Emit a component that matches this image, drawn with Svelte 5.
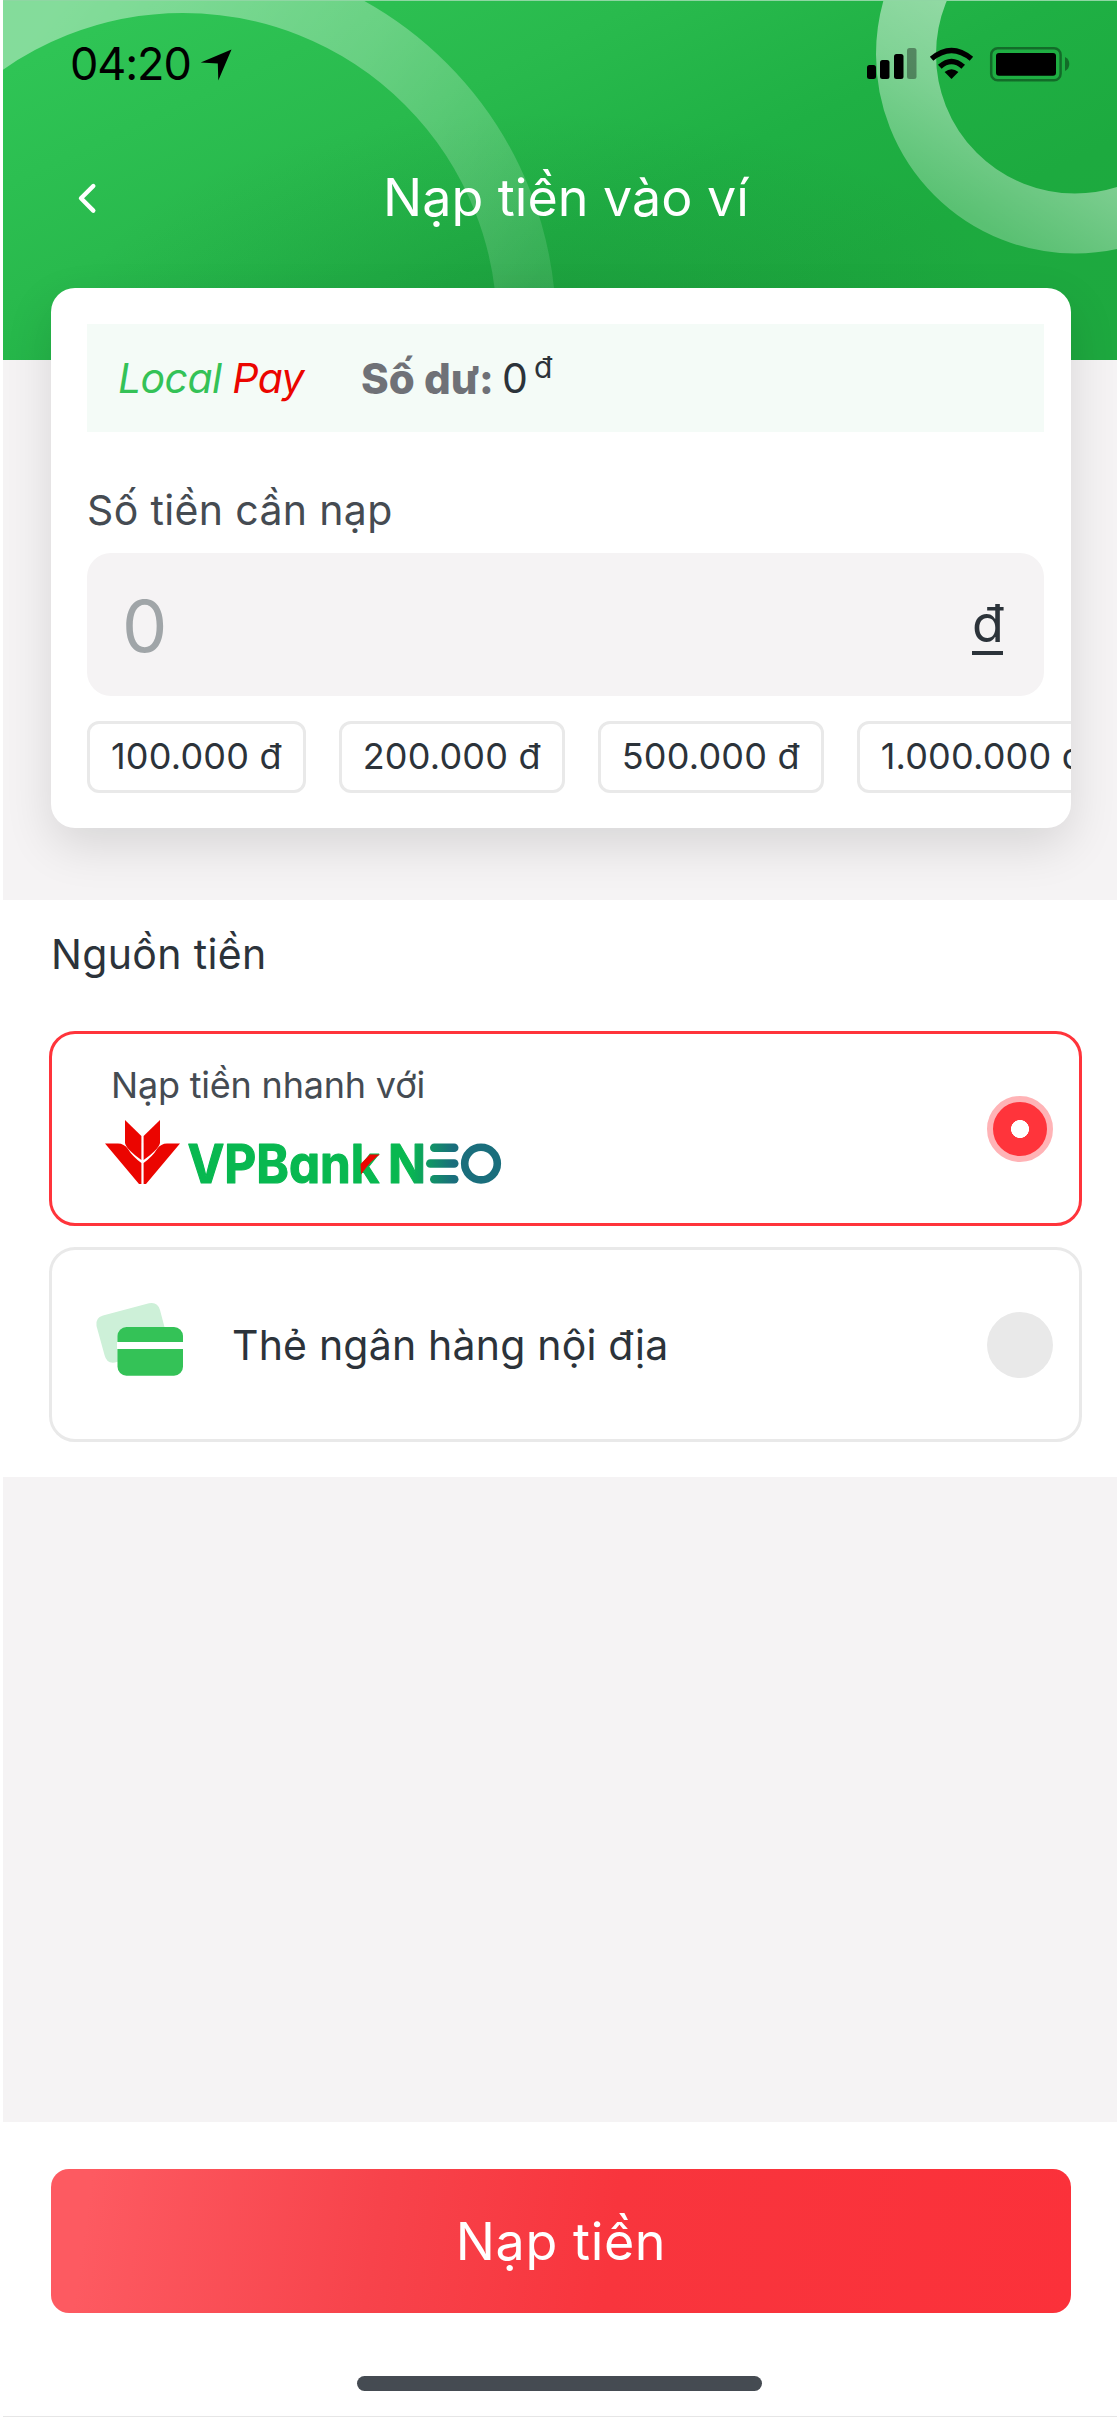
<script lang="ts">
	const amounts = ['100.000 đ', '200.000 đ', '500.000 đ', '1.000.000 đ'];

	let selected = $state('neo');
	let amount = $state('');
</script>

<div class="screen">
	<header>
		<svg class="rings" width="1114" height="360" viewBox="3 0 1114 360">
			<defs>
				<linearGradient id="ringBig" gradientUnits="userSpaceOnUse" x1="60" y1="0" x2="500" y2="330">
					<stop offset="0" stop-color="#fff" stop-opacity="0.41" />
					<stop offset="0.5" stop-color="#fff" stop-opacity="0.29" />
					<stop offset="1" stop-color="#fff" stop-opacity="0.11" />
				</linearGradient>
				<linearGradient id="ringSmall" gradientUnits="userSpaceOnUse" x1="1040" y1="20" x2="940" y2="200">
					<stop offset="0" stop-color="#fff" stop-opacity="0.53" />
					<stop offset="0.5" stop-color="#fff" stop-opacity="0.43" />
					<stop offset="1" stop-color="#fff" stop-opacity="0.27" />
				</linearGradient>
			</defs>
			<circle cx="183" cy="326" r="343.5" fill="none" stroke="url(#ringBig)" stroke-width="59" />
			<circle cx="1075" cy="53.5" r="169" fill="none" stroke="url(#ringSmall)" stroke-width="60" />
		</svg>

		<div class="status">
			<span class="clock">04:20</span>
			<svg class="location" width="32" height="32" viewBox="200 49 32 32">
				<path d="M231.5 49.5L218.3 80.5L217.8 63.6L200.7 62.6Z" />
			</svg>
			<svg class="signals" width="204" height="36" viewBox="866 46 204 36">
				<rect x="867" y="65" width="9" height="14" rx="2.5" />
				<rect x="880" y="60" width="9.5" height="19" rx="2.5" />
				<rect x="894" y="54" width="9.5" height="25" rx="2.5" />
				<rect x="907" y="48" width="9.5" height="31" rx="2.5" fill="#000" fill-opacity="0.36" />
				<path d="M951.5 79L944.6 72Q951.5 66.6 958.4 72Z" />
				<path d="M939.8 66.8Q951.5 56.2 963.2 66.8" fill="none" stroke="#000" stroke-width="5.4" />
				<path d="M931.6 58.8Q951.5 42.2 971.4 58.8" fill="none" stroke="#000" stroke-width="5.4" />
				<rect x="991.2" y="48.2" width="69.4" height="32" rx="6.5" fill="none" stroke="#000" stroke-opacity="0.38" stroke-width="2.5" />
				<rect x="996" y="53" width="60" height="22.8" rx="3" />
				<path d="M1065 57Q1069.3 59 1069.3 64T1065 71Z" fill-opacity="0.38" />
			</svg>
		</div>

		<div class="navbar">
			<button class="back" aria-label="Quay lại">
				<svg width="20" height="32" viewBox="77 182 20 32">
					<path d="M93.3 186L81 198.3L93.3 210.6" fill="none" stroke="#fff" stroke-width="4.4" stroke-linecap="round" stroke-linejoin="round" />
				</svg>
			</button>
			<h1>Nạp tiền vào ví</h1>
		</div>
	</header>

	<section class="card">
		<div class="balance">
			<span class="brand">Local <em>Pay</em></span>
			<b>Số dư:</b>
			<span class="value">0</span>
			<span class="unit">đ</span>
		</div>

		<label for="amount">Số tiền cần nạp</label>
		<div class="field">
			<input id="amount" placeholder="0" bind:value={amount} />
			<span class="currency">đ</span>
		</div>

		<div class="chips">
			{#each amounts as item}
				<button class="chip" onclick={() => (amount = item.replace(' đ', ''))}>{item}</button>
			{/each}
		</div>
	</section>

	<section class="sources">
		<h2>Nguồn tiền</h2>

		<button class="option" class:active={selected === 'neo'} onclick={() => (selected = 'neo')}>
			<span class="neo">
				<span class="hint">Nạp tiền nhanh với</span>
				<svg class="neo-logo" width="400" height="70" viewBox="103 1117 400 70">
					<defs>
						<linearGradient id="neoLetter" gradientUnits="userSpaceOnUse" x1="388" y1="0" x2="460" y2="0">
							<stop offset="0.3" stop-color="#08b850" />
							<stop offset="0.9" stop-color="#1a6e7c" />
						</linearGradient>
					</defs>
					<g fill="#eb0500">
						<path d="M125 1120L141.4 1136V1160Q126 1149 125 1143Z" />
						<path d="M160 1120L143.6 1136V1160Q159 1149 160 1143Z" />
						<path d="M105 1143.5H118Q124 1143.5 128 1149Q132 1156 141.4 1163V1184H139Z" />
						<path d="M180 1143.5H167Q161 1143.5 157 1149Q153 1156 143.6 1163V1184H146Z" />
					</g>
					<text class="logo" x="187.500" y="1183" textLength="192" lengthAdjust="spacingAndGlyphs" fill="#08b850" stroke="#08b850">VPBank</text>
					<path d="M360.500 1164L370 1154.500H380Q372 1159 361 1174.500Z" fill="#eb0500" />
					<text class="logo" x="388" y="1183" textLength="38" lengthAdjust="spacingAndGlyphs" fill="url(#neoLetter)" stroke="url(#neoLetter)">N</text>
					<g fill="url(#neoLetter)">
						<rect x="430" y="1143.5" width="28.500" height="8.600" rx="4.300" />
						<rect x="426" y="1159.2" width="32.500" height="8.600" rx="4.300" />
						<rect x="430" y="1174.9" width="28.500" height="8.600" rx="4.300" />
					</g>
					<circle cx="481" cy="1163.600" r="16.300" fill="none" stroke="#1a6e7c" stroke-width="7.600" />
				</svg>
			</span>
			<span class="radio"></span>
		</button>

		<button class="option" class:active={selected === 'card'} onclick={() => (selected = 'card')}>
			<svg class="cards" width="90" height="78" viewBox="94 1300 90 78">
				<path d="M103 1315.5L149 1303.3Q157.5 1301.5 160 1310L165 1329V1340L117 1362Q107 1365 104.5 1355L96.5 1326Q95 1318 103 1315.5Z" fill="#cdf0d8" />
				<rect x="117.5" y="1327" width="65.5" height="48.7" rx="9" fill="#34c257" />
				<rect x="117" y="1342" width="67" height="7" fill="#fff" />
			</svg>
			<span class="name">Thẻ ngân hàng nội địa</span>
			<span class="radio"></span>
		</button>
	</section>

	<footer>
		<button class="submit">Nạp tiền</button>
		<div class="home"></div>
	</footer>
</div>

<style>
	:global(body) {
		margin: 0;
		background: #fff;
	}

	.screen {
		box-sizing: border-box;
		width: 1117px;
		height: 2417px;
		padding-left: 3px;
		display: flex;
		flex-direction: column;
		overflow: hidden;
		background: linear-gradient(#fff, #fff) 0 0 / 3px 100% no-repeat, #f5f3f4;
		font-family: Inter, 'Liberation Sans', sans-serif;
		color: #2c333a;
	}

	button {
		margin: 0;
		padding: 0;
		border: 0;
		background: none;
		font: inherit;
		color: inherit;
		cursor: pointer;
	}

	svg {
		display: block;
		flex: none;
	}

	header {
		position: relative;
		box-sizing: border-box;
		height: 360px;
		flex: none;
		border-top: 1px solid #8fd6a3;
		background:
			radial-gradient(460px 190px at 540px 300px, rgba(20, 60, 30, 0.12), transparent),
			linear-gradient(155deg, #2fc455 8%, #29ba4d 34%, #1fb044 56%, #1daa3f 75%, #1ea83f 100%);
	}

	.rings {
		position: absolute;
		left: 0;
		top: 0;
	}

	.status {
		position: relative;
		display: flex;
		align-items: center;
		height: 124px;
		padding: 0 47px 0 67px;
	}

	.clock {
		font-size: 45px;
		letter-spacing: -1.1px;
		color: #000;
		width: 130px;
		white-space: nowrap;
	}

	.location {
		margin-top: 4px;
	}

	.signals {
		margin-left: auto;
		margin-top: 2px;
	}

	.navbar {
		position: relative;
		display: flex;
		align-items: center;
		height: 145px;
		padding-left: 74px;
	}

	h1 {
		margin: 0 0 0 286px;
		font-size: 52px;
		font-weight: 400;
		color: #fff;
		white-space: nowrap;
	}

	.card {
		position: relative;
		box-sizing: border-box;
		height: 540px;
		flex: none;
		margin: -72px 46px 72px 48px;
		padding: 36px 0 0 36px;
		border-radius: 24px;
		background: #fff;
		box-shadow: 0 18px 48px rgba(0, 0, 0, 0.12);
		overflow: hidden;
	}

	.balance {
		display: flex;
		align-items: center;
		height: 108px;
		margin-right: 27px;
		padding-left: 31px;
		background: #f4fbf7;
		font-size: 41px;
	}

	.brand {
		width: 243px;
		font-style: italic;
		letter-spacing: -0.6px;
		color: #34c257;
		white-space: nowrap;
	}

	.brand em {
		color: #eb0500;
	}

	.balance b {
		width: 141px;
		font-size: 42px;
		font-weight: 800;
		color: #6f7177;
		white-space: nowrap;
	}

	.value {
		width: 32px;
	}

	.unit {
		margin-top: -22px;
		font-size: 30px;
	}

	label {
		display: block;
		margin-top: 53px;
		font-size: 41px;
		line-height: 50px;
		letter-spacing: 0.35px;
		color: #454b52;
	}

	.field {
		display: flex;
		align-items: center;
		box-sizing: border-box;
		height: 143px;
		margin: 18px 27px 0 0;
		padding: 2px 41px 0 35px;
		border-radius: 24px;
		background: #f5f3f4;
	}

	input {
		flex: 1;
		min-width: 0;
		padding: 0;
		border: 0;
		outline: 0;
		background: none;
		font: 72px Inter, sans-serif;
		color: #2c333a;
	}

	input::placeholder {
		color: #a0a5a8;
		opacity: 1;
	}

	.currency {
		border-bottom: 4px solid #2c333a;
		width: 31px;
		height: 54px;
		text-align: center;
		font-size: 52px;
		line-height: 54px;
	}

	.chips {
		display: flex;
		gap: 33px;
		margin-top: 25px;
	}

	.chip {
		box-sizing: border-box;
		height: 72px;
		flex: none;
		padding: 0 21px 2px;
		border: 3px solid #e9e9e9;
		border-radius: 12px;
		font-size: 36px;
		letter-spacing: 0.2px;
		white-space: nowrap;
	}

	.sources {
		display: flex;
		flex-direction: column;
		gap: 21px;
		box-sizing: border-box;
		height: 577px;
		flex: none;
		padding: 29px 35px 0 46px;
		background: #fff;
	}

	h2 {
		margin: 0 0 31px 2px;
		font-size: 41px;
		line-height: 50px;
		font-weight: 400;
		letter-spacing: 0.35px;
	}

	.option {
		display: flex;
		align-items: center;
		box-sizing: border-box;
		height: 195px;
		padding: 0 26px 0 42px;
		border: 3px solid #e9e9e9;
		border-radius: 26px;
		text-align: left;
	}

	.option.active {
		border-color: #ff343b;
	}

	.neo {
		display: flex;
		flex-direction: column;
		gap: 7px;
		margin: -10px 0 0 9px;
	}

	.neo-logo {
		overflow: visible;
	}

	.hint {
		padding-left: 8px;
		font-size: 36px;
		line-height: 50px;
		letter-spacing: -0.2px;
		color: #454b52;
	}

	.logo {
		font-family: Inter, sans-serif;
		font-size: 53px;
		font-weight: 700;
		font-feature-settings: 'cv11';
		stroke-width: 1.2px;
		stroke-linejoin: round;
	}

	.cards {
		margin-top: -11px;
	}

	.name {
		margin-left: 48px;
		font-size: 41px;
		letter-spacing: 0.2px;
		white-space: nowrap;
	}

	.radio {
		box-sizing: border-box;
		width: 66px;
		height: 66px;
		margin-left: auto;
		border-radius: 50%;
		background: #e9e9e9;
	}

	.active .radio {
		border: 6px solid #ffb3b6;
		background: radial-gradient(circle, #fff 8.7px, #ff343b 9.3px) border-box;
	}

	footer {
		display: flex;
		flex-direction: column;
		align-items: center;
		box-sizing: border-box;
		height: 295px;
		margin-top: auto;
		padding: 47px 46px 0 48px;
		border-bottom: 1px solid #e6e6e6;
		background: #fff;
	}

	.submit {
		width: 100%;
		height: 144px;
		border-radius: 18px;
		background: linear-gradient(98deg, #fd5a61 4%, #f7434b 32%, #f8353d 55%, #fb313a 100%);
		font-size: 52px;
		letter-spacing: 0.6px;
		color: #fff;
	}

	.home {
		width: 405px;
		height: 15px;
		margin: 63px 3px 0 0;
		border-radius: 8px;
		background: #454b52;
	}
</style>
